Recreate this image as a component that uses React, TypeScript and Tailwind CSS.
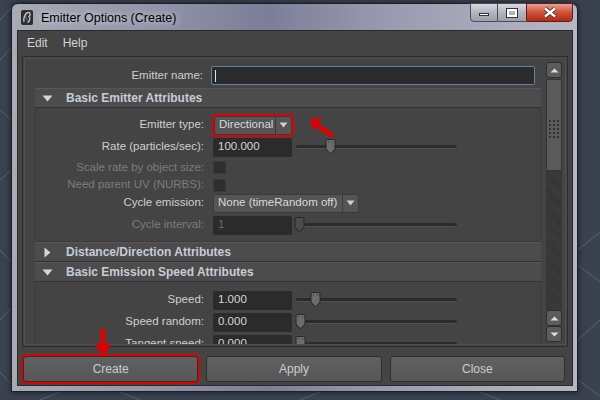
import React from "react";

function Slider({ pos, disabled }: { pos: number; disabled?: boolean }) {
  return (
    <div className="relative ml-[4px] w-[161px] h-[16px] flex items-center">
      <div className="w-full h-[4px] rounded-full bg-[#2b2b2b] border-b border-[#505050]" />
      <svg
        className="absolute top-[0px]"
        style={{ left: pos }}
        width="11"
        height="16"
        viewBox="0 0 11 16"
      >
        <path
          d="M1 2 Q1 0.5 2.5 0.5 H8.5 Q10 0.5 10 2 V10 L5.5 15 L1 10 Z"
          fill={disabled ? "#4c4c4c" : "#6c6c6c"}
          stroke="#262626"
        />
        {!disabled && <path d="M3 3 H4 M7 3 H8" stroke="#2a2a2a" />}
      </svg>
    </div>
  );
}

function Row({
  label,
  h,
  disabled,
  children,
}: {
  label: string;
  h: string;
  disabled?: boolean;
  children?: React.ReactNode;
}) {
  return (
    <div className={`flex items-center ${h}`}>
      <div
        className={`w-[168px] text-right text-[11.5px] ${disabled ? "text-[#7c7c7c]" : "text-[#cfcfcf]"}`}
      >
        {label}
      </div>
      <div className="ml-[9px] flex items-center">{children}</div>
    </div>
  );
}

function Field({ value, disabled, w = "w-[79px]" }: { value: string; disabled?: boolean; w?: string }) {
  return (
    <div
      className={`${w} h-[19px] rounded-[2px] bg-[#2b2b2b] flex items-center pl-[5px] text-[11.5px] ${disabled ? "text-[#6a6a6a]" : "text-[#d6d6d6]"}`}
    >
      {value}
    </div>
  );
}

function Arrow() {
  return (
    <svg width="9" height="6" viewBox="0 0 9 6">
      <path d="M0.5 0.5 H8.5 L4.5 5.5 Z" fill="#cfcfcf" />
    </svg>
  );
}

function Dropdown({ value, w }: { value: string; w: string }) {
  return (
    <div className={`${w} h-[19px] rounded-[2px] bg-[#555555] border border-[#3a3a3a] flex items-stretch text-[11.5px] text-[#d8d8d8]`}>
      <div className="flex-1 flex items-center pl-[4px] whitespace-nowrap overflow-hidden">{value}</div>
      <div className="w-[16px] border-l border-[#3a3a3a] flex items-center justify-center">
        <Arrow />
      </div>
    </div>
  );
}

function Check() {
  return <div className="w-[13px] h-[13px] bg-[#2e2e2e] border border-[#3a3a3a]" />;
}

function Header({ title, open }: { title: string; open: boolean }) {
  return (
    <div className="h-[20px] bg-[#4c4c4c] border-t border-[#575757] border-b border-b-[#333333] flex items-center">
      <div className="w-[31px] pl-[7px] flex items-center">
        {open ? (
          <svg width="11" height="7" viewBox="0 0 11 7">
            <path d="M0.5 0.5 H10.5 L5.5 6.5 Z" fill="#d6d6d6" />
          </svg>
        ) : (
          <svg width="7" height="11" viewBox="0 0 7 11" className="ml-[2px]">
            <path d="M0.5 0.5 V10.5 L6.5 5.5 Z" fill="#d6d6d6" />
          </svg>
        )}
      </div>
      <div className="text-[12px] font-bold text-[#c5cdd6]">{title}</div>
    </div>
  );
}

function ScrollBtn({ up }: { up: boolean }) {
  return (
    <div className="h-[16px] rounded-[3px] bg-[#5c5c5c] border border-[#2e2e2e] flex items-center justify-center">
      <svg width="9" height="5" viewBox="0 0 9 5">
        {up ? <path d="M0.5 4.5 H8.5 L4.5 0.5 Z" fill="#dcdcdc" /> : <path d="M0.5 0.5 H8.5 L4.5 4.5 Z" fill="#dcdcdc" />}
      </svg>
    </div>
  );
}

export default function App() {
  return (
    <div className="relative w-[600px] h-[400px] overflow-hidden bg-[#3a4250] font-['Liberation_Sans',Arial,sans-serif]">
      <svg className="absolute inset-0" width="600" height="400">
        <g stroke="#5a6472" strokeWidth="1" fill="none">
          <path d="M0 20 L11 8 M0 60 L11 48 M0 110 L11 120 M0 180 L11 170 M0 250 L11 262 M0 320 L11 308 M0 372 L11 384" />
          <path d="M578 250 L600 232 M578 265 L600 282 M578 340 L600 320 M578 380 L600 396 M40 400 L60 392 M120 392 L140 400 M300 400 L320 392 M480 392 L500 400" />
        </g>
      </svg>
      <div className="relative ml-[11px] mt-[3px] w-[567px] h-[389px] rounded-t-[7px] border border-[#1e2028] bg-[linear-gradient(to_right,#a8aab4,#9294a8_25%,#7c7e98_45%,#9899ae_65%,#b6b7c5)] flex flex-col shadow-[0_0_6px_rgba(0,0,0,0.6)]">
        {/* title bar */}
        <div className="h-[26px] flex items-start relative">
          <div className="mt-[6px] ml-[9px] w-[12px] h-[15px] rounded-[2px] bg-[#2e2e30] flex items-center justify-center">
            <svg width="10" height="13" viewBox="0 0 10 13">
              <path d="M2 11 C1 7 3 2 6 1.5 C8.5 1.2 9 4 7 5.5 C8.5 6.5 8 10 5.5 11.5" stroke="#c9c9c9" strokeWidth="1.3" fill="none" />
              <path d="M4 4 C3.5 6 4 8.5 5.5 9" stroke="#8a8a8a" strokeWidth="1" fill="none" />
            </svg>
          </div>
          <div className="ml-[8px] mt-[5px] text-[12.5px] text-black [text-shadow:0_0_6px_rgba(255,255,255,0.8)]">
            Emitter Options (Create)
          </div>
          <div className="ml-auto mr-[4px] flex h-[19px] -mt-[1px]">
            <div className="w-[28px] rounded-bl-[4px] border border-[#4a4c58] bg-[linear-gradient(#d8d9e0,#b4b5c0_50%,#9c9eaa)] flex items-center justify-center">
              <div className="w-[10px] h-[3px] bg-white border border-[#333] mt-[4px]" />
            </div>
            <div className="w-[28px] border-y border-[#4a4c58] bg-[linear-gradient(#d8d9e0,#b4b5c0_50%,#9c9eaa)] flex items-center justify-center">
              <div className="w-[10px] h-[8px] border-2 border-white outline outline-1 outline-[#333]" />
            </div>
            <div className="w-[47px] rounded-br-[4px] border border-[#5a2020] bg-[linear-gradient(#e8a090,#d05038_50%,#b02a18)] flex items-center justify-center">
              <svg width="14" height="11" viewBox="0 0 14 11">
                <path d="M2 1.5 L12 9.5 M12 1.5 L2 9.5" stroke="#333" strokeWidth="4" />
                <path d="M2 1.5 L12 9.5 M12 1.5 L2 9.5" stroke="#fff" strokeWidth="2.4" />
              </svg>
            </div>
          </div>
        </div>
        {/* client */}
        <div className="ml-[5px] mr-[4px] h-[356px] bg-[#444444] border border-[#2a2a2a] flex flex-col">
          <div className="h-[24px] flex items-center gap-[15px] pl-[9px] text-[12px] text-[#d2d2d2]">
            <span>Edit</span>
            <span>Help</span>
          </div>
          {/* panel */}
          <div className="mt-[1px] mx-[4px] h-[291px] border border-[#2e2e2e] p-[1px]">
            <div className="h-full border border-[#505050] flex overflow-hidden">
              <div className="flex-1 pl-[10px] pr-[5px] overflow-hidden">
                <div className="h-[7px]" />
                <div className="flex items-center h-[19px]">
                  <div className="w-[168px] text-right text-[11.5px] text-[#cfcfcf]">Emitter name:</div>
                  <div className="ml-[8px] w-[324px] h-[19px] bg-[#2b2b2b] border border-[#5d82a6] rounded-[2px] flex items-center pl-[3px]">
                    <div className="w-[1px] h-[12px] bg-[#e0e0e0]" />
                  </div>
                </div>
                <div className="h-[3px]" />
                <Header title="Basic Emitter Attributes" open />
                <div className="border-x border-b border-[#3a3a3a] pt-[6px] pb-[4px]">
                  <Row label="Emitter type:" h="h-[22px]">
                    <div className="ml-[1px] ring-2 ring-[#e00000] rounded-[2px]">
                      <Dropdown value="Directional" w="w-[78px]" />
                    </div>
                  </Row>
                  <Row label="Rate (particles/sec):" h="h-[22px]">
                    <Field value="100.000" />
                    <Slider pos={29} />
                  </Row>
                  <Row label="Scale rate by object size:" h="h-[19px]" disabled>
                    <Check />
                  </Row>
                  <Row label="Need parent UV (NURBS):" h="h-[16px]" disabled>
                    <Check />
                  </Row>
                  <Row label="Cycle emission:" h="h-[20px]">
                    <Dropdown value="None (timeRandom off)" w="w-[146px]" />
                  </Row>
                  <Row label="Cycle interval:" h="h-[24px]" disabled>
                    <Field value="1" disabled />
                    <Slider pos={-2} disabled />
                  </Row>
                </div>
                <Header title="Distance/Direction Attributes" open={false} />
                <Header title="Basic Emission Speed Attributes" open />
                <div className="border-x border-[#3a3a3a] pt-[7px]">
                  <Row label="Speed:" h="h-[22px]">
                    <Field value="1.000" />
                    <Slider pos={14} />
                  </Row>
                  <Row label="Speed random:" h="h-[22px]">
                    <Field value="0.000" />
                    <Slider pos={-1} />
                  </Row>
                  <Row label="Tangent speed:" h="h-[22px]">
                    <Field value="0.000" />
                    <Slider pos={-1} />
                  </Row>
                </div>
              </div>
              {/* scrollbar */}
              <div className="w-[16px] mr-[3px] pt-[3px] pb-[2px] flex flex-col">
                <ScrollBtn up />
                <div className="h-[92px] mt-[1px] rounded-[2px] bg-[#5a5a5a] border border-[#333] flex items-center justify-center">
                  <div className="grid grid-cols-3 gap-[2px] mt-[8px]">
                    {Array.from({ length: 15 }).map((_, i) => (
                      <div key={i} className="w-[2px] h-[2px] bg-[#333]" />
                    ))}
                  </div>
                </div>
                <div className="flex-1 bg-[repeating-linear-gradient(45deg,#343434_0px,#343434_1px,#3c3c3c_1px,#3c3c3c_2px)]" />
                <ScrollBtn up />
                <ScrollBtn up={false} />
              </div>
            </div>
          </div>
          {/* buttons */}
          <div className="mt-[9px] pl-[5px] pr-[7px] grid grid-cols-3 gap-[8px] h-[26px]">
            {["Create", "Apply", "Close"].map((b) => (
              <div
                key={b}
                className={`rounded-[3px] border border-[#2e2e2e] bg-[linear-gradient(#606060,#575757)] flex items-center justify-center text-[12px] text-[#c8ccd2] ${b === "Create" ? "ring-2 ring-[#e00000]" : ""}`}
              >
                {b}
              </div>
            ))}
          </div>
        </div>
      </div>
      {/* red arrows */}
      <svg className="absolute left-[302px] top-[116px]" width="40" height="30" viewBox="0 0 40 30">
        <path d="M10 6 L31 20" stroke="#e00000" strokeWidth="5" />
        <path d="M9 2 L20 3 L10 14 Z" fill="#e00000" />
      </svg>
      <svg className="absolute left-[92px] top-[327px]" width="22" height="32" viewBox="0 0 22 32">
        <path d="M11 2 V20" stroke="#e00000" strokeWidth="5" />
        <path d="M3 17 H19 L11 30 Z" fill="#e00000" />
      </svg>
    </div>
  );
}
